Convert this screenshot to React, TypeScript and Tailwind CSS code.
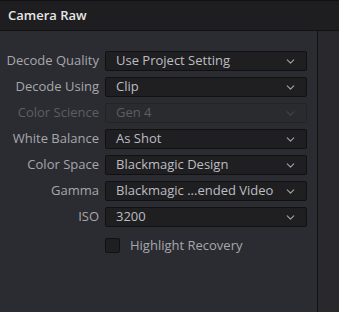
import { ChevronDown } from 'lucide-react';

const rows = [
  { label: 'Decode Quality', value: 'Use Project Setting' },
  { label: 'Decode Using', value: 'Clip' },
  { label: 'Color Science', value: 'Gen 4', disabled: true },
  { label: 'White Balance', value: 'As Shot' },
  { label: 'Color Space', value: 'Blackmagic Design' },
  { label: 'Gamma', value: 'Blackmagic ...ended Video' },
  { label: 'ISO', value: '3200' },
];

export default function App() {
  return (
    <div
      className="w-[339px] h-[312px] flex flex-col bg-[#2b2c31] overflow-hidden"
      style={{ fontFamily: '"Open Sans", "Noto Sans", sans-serif' }}
    >
      <div className="h-[31px] shrink-0 bg-[#1e1e21] border-t border-b border-[#111113] flex items-center px-2">
        <span className="text-[13px] font-semibold text-[#e6e6e6]">Camera Raw</span>
      </div>
      <div className="flex flex-1">
        <div className="w-[317px] flex flex-col gap-[6px] pt-[20px]">
          {rows.map((r) => (
            <div key={r.label} className="flex items-center h-[20px]">
              <div
                className={`w-[99px] text-right text-[13px] ${r.disabled ? 'text-[#5d5e63]' : 'text-[#a7a7ac]'}`}
              >
                {r.label}
              </div>
              <div
                className={`ml-[6px] w-[202px] h-[20px] rounded-[2px] border flex items-center justify-between pl-[10px] pr-[9px] ${
                  r.disabled
                    ? 'bg-[#2a2b2f] border-[#232427] text-[#5d5e63]'
                    : 'bg-[#1f1f22] border-[#111113] text-[#bdbdc1]'
                }`}
              >
                <span className="text-[13px] whitespace-nowrap">{r.value}</span>
                <ChevronDown
                  className={`w-[13px] h-[13px] ${r.disabled ? 'text-[#45464b]' : 'text-[#a3a3a8]'}`}
                  strokeWidth={2}
                />
              </div>
            </div>
          ))}
          <div className="flex items-center h-[15px] mt-[5px] ml-[105px]">
            <div className="w-[15px] h-[15px] rounded-[2px] bg-[#1f1f22] border border-[#111113]" />
            <span className="ml-[10px] text-[13px] text-[#a7a7ac]">Highlight Recovery</span>
          </div>
        </div>
        <div className="flex-1 border-l border-[#121214] bg-[#28282d]" />
      </div>
    </div>
  );
}
